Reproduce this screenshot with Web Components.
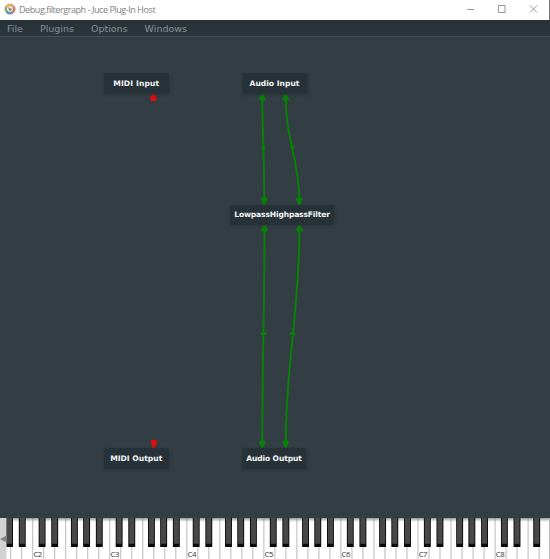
<!DOCTYPE html>
<html lang="en"><head><meta charset="utf-8"><title>Debug.filtergraph - Juce Plug-In Host</title>
<style>html,body{margin:0;height:100%;overflow:hidden}body{background:#323e44}</style></head><body>
<host-window></host-window>
<script>
const define=(name,html,setup)=>customElements.define(name,class extends HTMLElement{
  connectedCallback(){
    if(this.shadowRoot)return;
    const t=document.createElement('template');t.innerHTML=html;
    this.attachShadow({mode:'open'}).append(t.content.cloneNode(true));
    if(setup)setup(this,this.shadowRoot);
  }
});

define('title-bar',`<style>
:host{display:flex;align-items:center;height:20px;background:#fff;color:#808080;font:9px/18px "Open Sans","Noto Sans",sans-serif;letter-spacing:-.43px;box-sizing:border-box;padding-left:4px}
.logo{width:12px;height:12px;flex:none;margin-top:-2px}
.name{margin-left:3px;margin-top:-1px;flex:1;white-space:nowrap}
.name span{display:inline-block}
.ctl{width:101px;height:20px;flex:none}
</style>
<svg class="logo" viewBox="-6 -6 12 12"><circle r="5.6" fill="#f4ead9"/>
<g fill="none" stroke-width="2.4"><path d="M0-4.2A4.2 4.2 0 0 1 3.64-2.1" stroke="#dda46b"/><path d="M3.64-2.1A4.2 4.2 0 0 1 3.64 2.1" stroke="#d67762"/><path d="M3.64 2.1A4.2 4.2 0 0 1 0 4.2" stroke="#8e83ac"/><path d="M0 4.2A4.2 4.2 0 0 1-3.64 2.1" stroke="#4d9bb5"/><path d="M-3.64 2.1A4.2 4.2 0 0 1-3.64-2.1" stroke="#90ac70"/><path d="M-3.64-2.1A4.2 4.2 0 0 1 0-4.2" stroke="#d9b65b"/></g>
<path d="M-2-2 2.6.6-.4 2.3Z" fill="#8a8580"/></svg>
<span class="name"><span><slot></slot></span></span>
<svg class="ctl" viewBox="449 0 101 20" fill="none" stroke="#999" stroke-width="1"><path d="M467 9.5h7"/><rect x="498.5" y="5.5" width="6.5" height="7"/><path d="M530 5.5l7 7M537 5.5l-7 7"/><path d="M549.5 0v20" stroke="#777"/></svg>`);

define('menu-bar',`<style>:host{display:flex;align-items:flex-end;height:17px;box-sizing:border-box;padding-left:7px;background:linear-gradient(#263238,#2b373d);border-bottom:1px solid #425057}</style><slot></slot>`);
define('menu-item',`<style>:host{display:block;font:9.5px/15px "DejaVu Sans",sans-serif;color:#879196;white-space:nowrap;margin-right:17px}</style><slot></slot>`);

define('plugin-node',`<style>:host{position:absolute;display:flex;align-items:center;justify-content:center;box-sizing:border-box;background:#263238;color:#f4f5f5;font:bold 7.6px/20px "DejaVu Sans",sans-serif;white-space:nowrap;border-radius:1.5px;box-shadow:1px 1px 3px #263238aa}</style><slot></slot>`,
 h=>{const [x,y,w,H]=h.getAttribute('box').split(' ');Object.assign(h.style,{left:x+'px',top:y+'px',width:w+'px',height:H+'px',letterSpacing:(h.getAttribute('tracking')||0)+'px'});});

define('graph-canvas',`<style>:host{display:block;position:relative;flex:1;min-height:0;background:#323e44}svg{position:absolute;inset:0}</style>
<svg width="550" height="482" viewBox="0 37 550 482">
<g fill="none" stroke="#078207" stroke-width="2"><path d="M262.3 98C262.3 135 264.3 155 264.3 200M285.7 98C285.7 140 299.3 160 299.3 200M264.5 228C264.5 310 262.3 360 262.3 443M299.5 228C299.5 310 285.7 365 285.7 443"/></g>
<g fill="#078207"><path id="u" d="M261.5 93h1.6l2.7 6.3-1.5 1.2h-4l-1.5-1.2Z"/><use href="#u" x="23.4"/><use href="#u" x="2.2" y="131"/><use href="#u" x="37.2" y="131"/>
<path id="d" d="M263.5 205h1.6l2.7-6.3-1.5-1.2h-4l-1.5 1.2Z"/><use href="#d" x="35"/><use href="#d" x="-2" y="243"/><use href="#d" x="21.4" y="243"/>
<path d="M260.5 146.500h5.800l-2.400 4zM289.300 147l6-1.700-2.200 5.200zM260.500 332.600h6v2.400h-6zM290 332.300l5.300.2v2.700l-5-.4z"/></g>
<g fill="#e60c0c"><path d="M152.800 93h1.600l1 2.800 1 .7v3l-1 1.500h-4l-1-1.500v-3l1.400-.7zM152.500 448h2.100l.7-2.800 1.500-.8v-4.400h-5.600v4.400l.9.8z"/></g></svg>
<slot></slot>`);

define('piano-keyboard',`<style>:host{display:block;height:41px;background:#fff;position:relative}svg{display:block}text{font:7.800px "Open Sans","Noto Sans",sans-serif;letter-spacing:-.45px;fill:#333;text-anchor:middle}</style>
<svg width="550" height="41"><defs><linearGradient id="s" x2="0" y2="1"><stop stop-color="#59666b" stop-opacity=".65"/><stop offset="1" stop-color="#777" stop-opacity="0"/></linearGradient></defs><g id="w"></g><rect width="550" height="4" fill="url(#s)"/><g id="b"></g><rect width="6.5" height="41" fill="#d3d3d3"/><path d="M0 21 6 17.8V24.2Z" fill="#85857f"/><rect x="549" width="1" height="41" fill="#bbb"/></svg>`,
(h,r)=>{let w='',b='';
 const start=-44.7,octave=77.05;
 for(let k=0;k<54;k++){const p=start+k*octave/7;if(p>6&&p<549)w+=`<rect x="${p}" width=".8" height="41" fill="#aaa"/>`}
 for(let o=1;o<8;o++)w+=`<text x="${start+o*octave+5.3}" y="38.900">C${o+1}</text>`;
 for(let o=0;o<8;o++)for(const d of [6.3,18.9,38.6,50.8,63.5]){const p=start+o*octave+d;
  if(p>5&&p<542)b+=`<rect x="${p}" width="6.9" height="29" fill="#090909"/><rect x="${p+.9}" width="5.1" height="25.8" fill="#484848"/>`}
 r.getElementById('w').innerHTML=w;r.getElementById('b').innerHTML=b;});

define('host-window',`<style>:host{display:flex;flex-direction:column;width:550px;height:559px}</style>
<title-bar>Debug.filtergraph - Juce Plug-In Host</title-bar>
<menu-bar><menu-item>File</menu-item><menu-item>Plugins</menu-item><menu-item>Options</menu-item><menu-item>Windows</menu-item></menu-bar>
<graph-canvas>
<plugin-node box="104 36 64.5 21" tracking=".12">MIDI Input</plugin-node>
<plugin-node box="242 36 65 21">Audio Input</plugin-node>
<plugin-node box="230 168 104 20" tracking="-.17">LowpassHighpassFilter</plugin-node>
<plugin-node box="104 411 64.5 21">MIDI Output</plugin-node>
<plugin-node box="242 411 64 21" tracking="-.13">Audio Output</plugin-node>
</graph-canvas><piano-keyboard></piano-keyboard>`);
</script></body></html>
